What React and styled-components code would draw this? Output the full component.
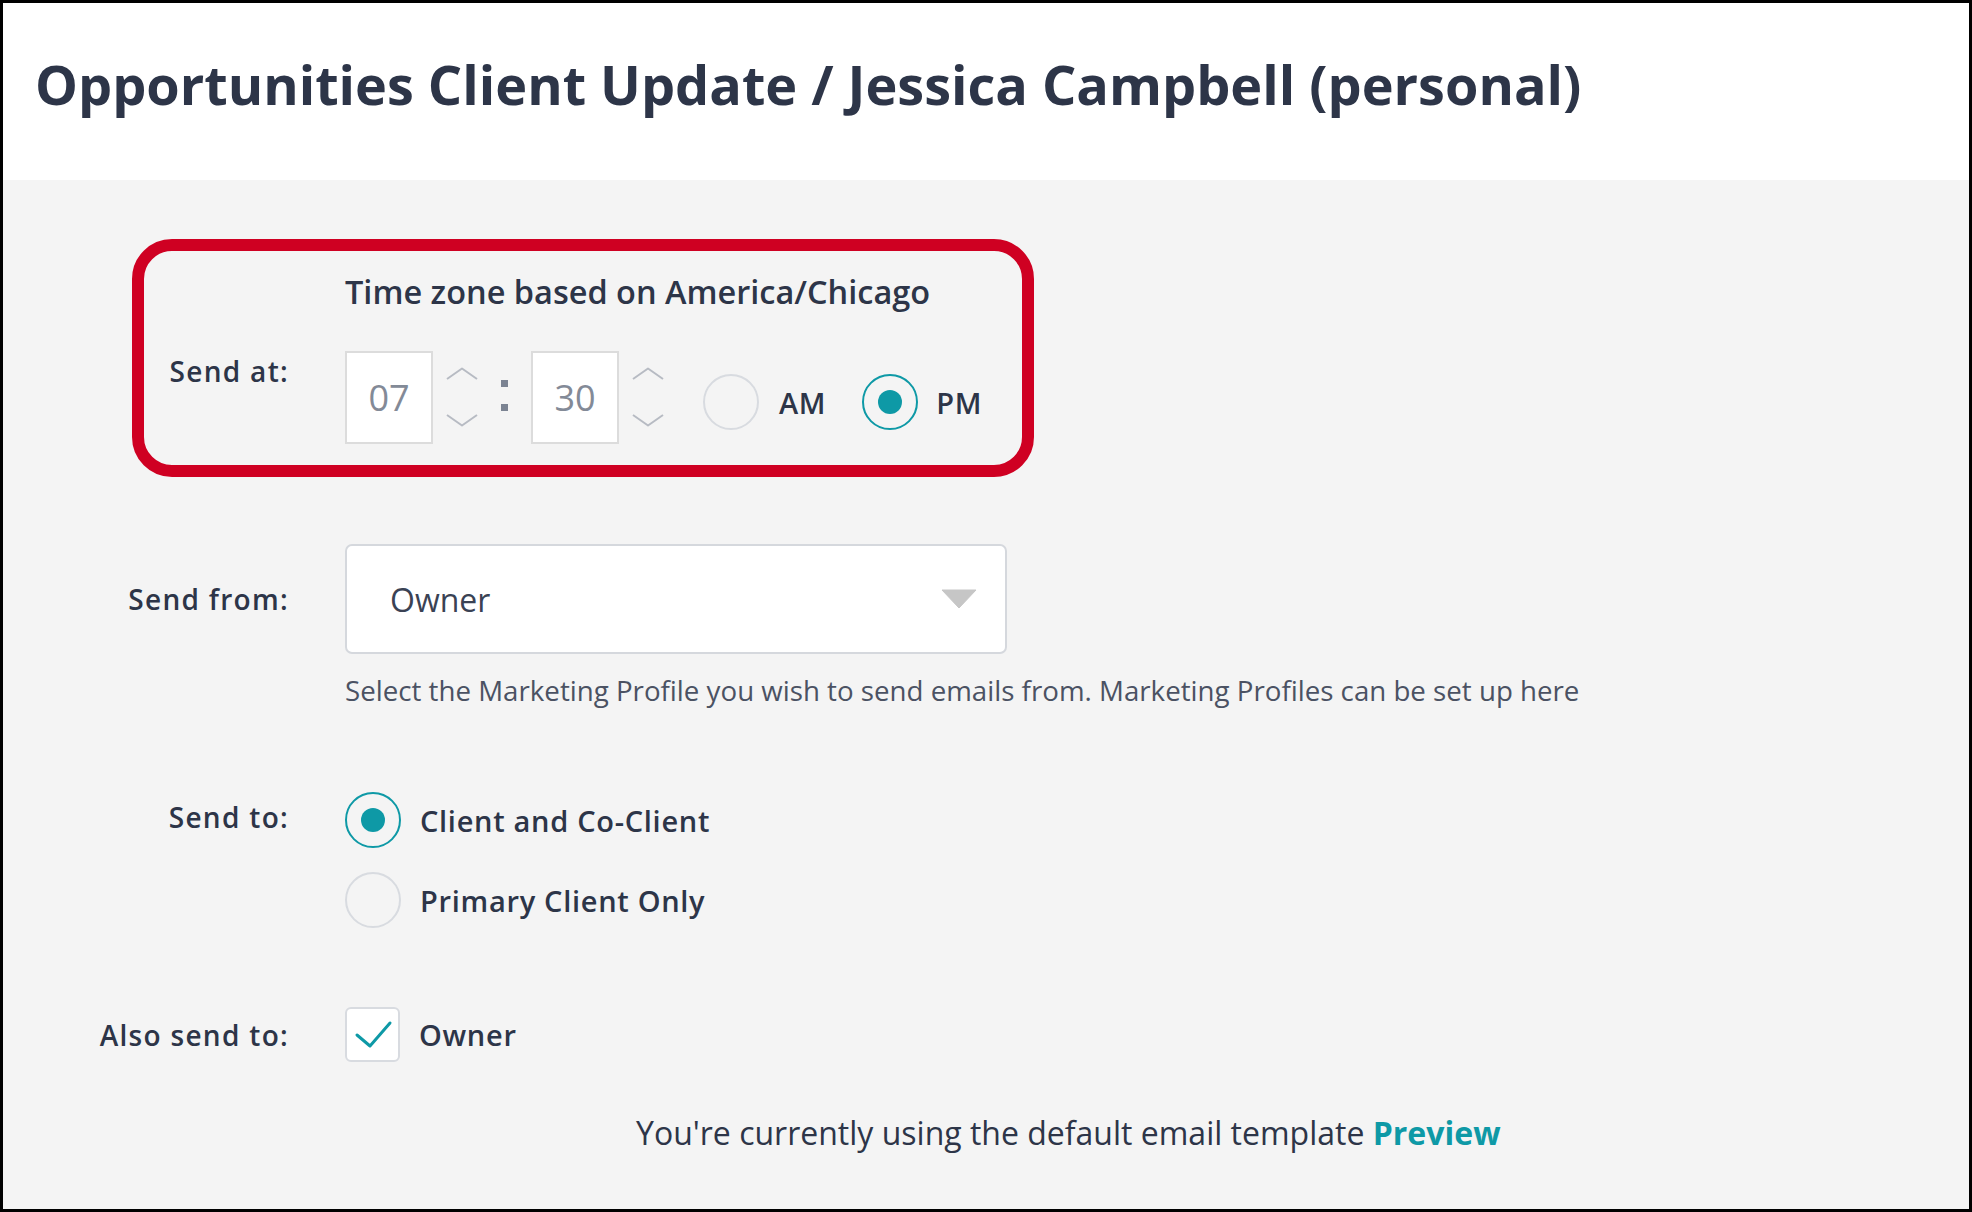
import styled, { createGlobalStyle } from "styled-components";

const GlobalStyle = createGlobalStyle`
  html, body {
    margin: 0;
    padding: 0;
    background: #ffffff;
  }
  body {
    font-family: "Open Sans", "Lato", sans-serif;
    color: #2d3548;
  }
`;

const TEAL = "#0e99a6";

const Frame = styled.div`
  width: 1972px;
  height: 1212px;
  box-sizing: border-box;
  border: 3px solid #000;
  background: #f4f4f4;
  display: flex;
  flex-direction: column;
  overflow: hidden;
`;

const Header = styled.header`
  background: #ffffff;
  height: 177px;
  box-sizing: border-box;
  padding: 46px 0 0 32px;
`;

const Title = styled.h1`
  margin: 0;
  font-size: 54px;
  line-height: 70px;
  font-weight: 700;
  color: #2d3548;
`;

const Body = styled.main`
  padding-top: 59px;
`;

const Highlight = styled.section`
  margin-left: 129px;
  width: 902px;
  box-sizing: border-box;
  border: 12px solid #cf0022;
  border-radius: 40px;
  padding: 22px 0 21px;
`;

const Row = styled.div`
  display: grid;
  grid-template-columns: ${(p) => p.labelWidth || 286}px 1fr;
  column-gap: 56px;
  align-items: ${(p) => p.align || "center"};
  margin-top: ${(p) => p.top || 0}px;
`;

const Label = styled.div`
  text-align: right;
  font-size: 28px;
  font-weight: 600;
  letter-spacing: 1.3px;
  line-height: 36px;
  color: #2d3548;
  padding-top: ${(p) => p.offset || 0}px;
`;

const Note = styled.div`
  font-size: 32.5px;
  font-weight: 600;
  line-height: 38px;
  color: #2d3548;
`;

const TimeControls = styled.div`
  display: flex;
  align-items: center;
`;

const NumberBox = styled.div`
  width: 88px;
  height: 93px;
  box-sizing: border-box;
  background: #ffffff;
  border: 2px solid #dcdcdc;
  display: flex;
  align-items: center;
  justify-content: center;
  font-size: 36px;
  color: #838a97;
`;

const Spinner = styled.div`
  height: 93px;
  box-sizing: border-box;
  padding: 16px 0 17px;
  margin-left: 13px;
  display: flex;
  flex-direction: column;
  justify-content: space-between;
`;

const Colon = styled.div`
  width: 26px;
  margin-left: ${(p) => p.left}px;
  margin-right: 14px;
  display: flex;
  flex-direction: column;
  align-items: center;
  gap: 17px;
  padding-bottom: 4px;

  &::before,
  &::after {
    content: "";
    width: 7px;
    height: 7px;
    background: #7b8392;
  }
`;

const RadioGroup = styled.div`
  display: flex;
  align-items: center;
  margin-left: ${(p) => p.left || 0}px;
  padding-top: 9px;
`;

const Option = styled.label`
  display: flex;
  align-items: center;
  gap: ${(p) => p.gap || 20}px;
  font-size: 29px;
  font-weight: 600;
  letter-spacing: 0.7px;
  color: #2d3548;
  margin-right: ${(p) => p.right || 0}px;
`;

const Radio = styled.span`
  width: 56px;
  height: 56px;
  box-sizing: border-box;
  border-radius: 50%;
  border: 2px solid ${(p) => (p.checked ? TEAL : "#d8dbe0")};
  display: flex;
  align-items: center;
  justify-content: center;
  flex-shrink: 0;

  &::after {
    content: "";
    display: ${(p) => (p.checked ? "block" : "none")};
    width: 24px;
    height: 24px;
    border-radius: 50%;
    background: ${TEAL};
  }
`;

const Select = styled.div`
  width: 662px;
  height: 110px;
  box-sizing: border-box;
  background: #ffffff;
  border: 2px solid #d5d8dd;
  border-radius: 7px;
  padding: 0 28px 0 43px;
  display: flex;
  align-items: center;
  justify-content: space-between;
  font-size: 32px;
  color: #3a4254;
`;

const Help = styled.p`
  margin: 20px 0 0;
  font-size: 27.7px;
  line-height: 32px;
  color: #4b5263;
`;

const Stack = styled.div`
  display: flex;
  flex-direction: column;
  gap: 24px;
`;

const Checkbox = styled.span`
  width: 55px;
  height: 55px;
  box-sizing: border-box;
  background: #ffffff;
  border: 2px solid #d8dbe0;
  border-radius: 6px;
  display: flex;
  align-items: center;
  justify-content: center;
`;

const Footer = styled.p`
  margin: 52px 0 0 633px;
  font-size: 32px;
  line-height: 38px;
  color: #2d3548;
`;

const Link = styled.a`
  color: ${TEAL};
  font-weight: 700;
  text-decoration: none;
`;

const Chevron = ({ up }) => (
  <svg width="32" height="13" viewBox="0 0 32 13" fill="none">
    <polyline
      points={up ? "1,12 16,1.5 31,12" : "1,1 16,11.5 31,1"}
      stroke="#b7bbc3"
      strokeWidth="2"
      strokeLinejoin="round"
    />
  </svg>
);

const TimeInput = ({ value }) => (
  <>
    <NumberBox>{value}</NumberBox>
    <Spinner>
      <Chevron up />
      <Chevron />
    </Spinner>
  </>
);

export default function App() {
  return (
    <>
      <GlobalStyle />
      <Frame>
        <Header>
          <Title>Opportunities Client Update / Jessica Campbell (personal)</Title>
        </Header>
        <Body>
          <Highlight>
            <Row labelWidth={145}>
              <span />
              <Note>Time zone based on America/Chicago</Note>
            </Row>
            <Row labelWidth={145} align="start" top={40}>
              <Label offset={2}>Send at:</Label>
              <TimeControls>
                <TimeInput value="07" />
                <Colon left={13} />
                <TimeInput value="30" />
                <RadioGroup left={39}>
                  <Option right={36}>
                    <Radio />
                    AM
                  </Option>
                  <Option gap={18}>
                    <Radio checked />
                    PM
                  </Option>
                </RadioGroup>
              </TimeControls>
            </Row>
          </Highlight>

          <Row top={67}>
            <Label>Send from:</Label>
            <Select>
              Owner
              <svg width="36" height="20" viewBox="0 0 36 20">
                <polygon points="1,1 35,1 18,19" fill="#c6c6c6" stroke="#c6c6c6" strokeLinejoin="round" />
              </svg>
            </Select>
          </Row>
          <Row>
            <span />
            <Help>
              Select the Marketing Profile you wish to send emails from. Marketing Profiles can be set up here
            </Help>
          </Row>

          <Row align="start" top={86}>
            <Label offset={7}>Send to:</Label>
            <Stack>
              <Option gap={19}>
                <Radio checked />
                Client and Co-Client
              </Option>
              <Option gap={19}>
                <Radio />
                Primary Client Only
              </Option>
            </Stack>
          </Row>

          <Row top={79}>
            <Label>Also send to:</Label>
            <Option gap={19}>
              <Checkbox>
                <svg width="40" height="30" viewBox="0 0 40 30" fill="none">
                  <polyline points="4,15 17,26 37,3" stroke={TEAL} strokeWidth="3" strokeLinecap="round" strokeLinejoin="round" />
                </svg>
              </Checkbox>
              Owner
            </Option>
          </Row>

          <Footer>
            You're currently using the default email template <Link href="#">Preview</Link>
          </Footer>
        </Body>
      </Frame>
    </>
  );
}
